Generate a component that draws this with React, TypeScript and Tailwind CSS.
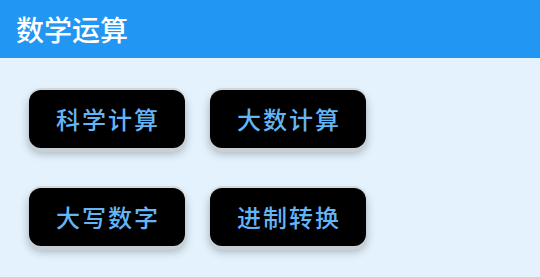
const items = ["科学计算", "大数计算", "大写数字", "进制转换"];

export default function App() {
  return (
    <div
      className="w-[540px] h-[277px] bg-[#e3f2fd] overflow-hidden"
      style={{ fontFamily: '"Noto Sans CJK SC", "Noto Sans", sans-serif' }}
    >
      <header className="h-[58px] bg-[#2196f3] flex items-center pl-[16px]">
        <h1 className="text-[28px] leading-none font-medium text-white">数学运算</h1>
      </header>

      <div className="pt-[32px] pl-[29px] grid grid-cols-[156px_156px] gap-x-[25px] gap-y-[40px]">
        {items.map((label) => (
          <button
            key={label}
            className="h-[58px] rounded-[12px] bg-black flex items-center justify-center text-[24px] leading-none font-medium tracking-[2px] text-[#64b5f6] shadow-[0_-2px_0_#d0d7dd,0_4px_0_#c8d0d6,0_5px_10px_rgba(0,0,0,0.3)]"
          >
            <span className="pl-[2px]">{label}</span>
          </button>
        ))}
      </div>
    </div>
  );
}
